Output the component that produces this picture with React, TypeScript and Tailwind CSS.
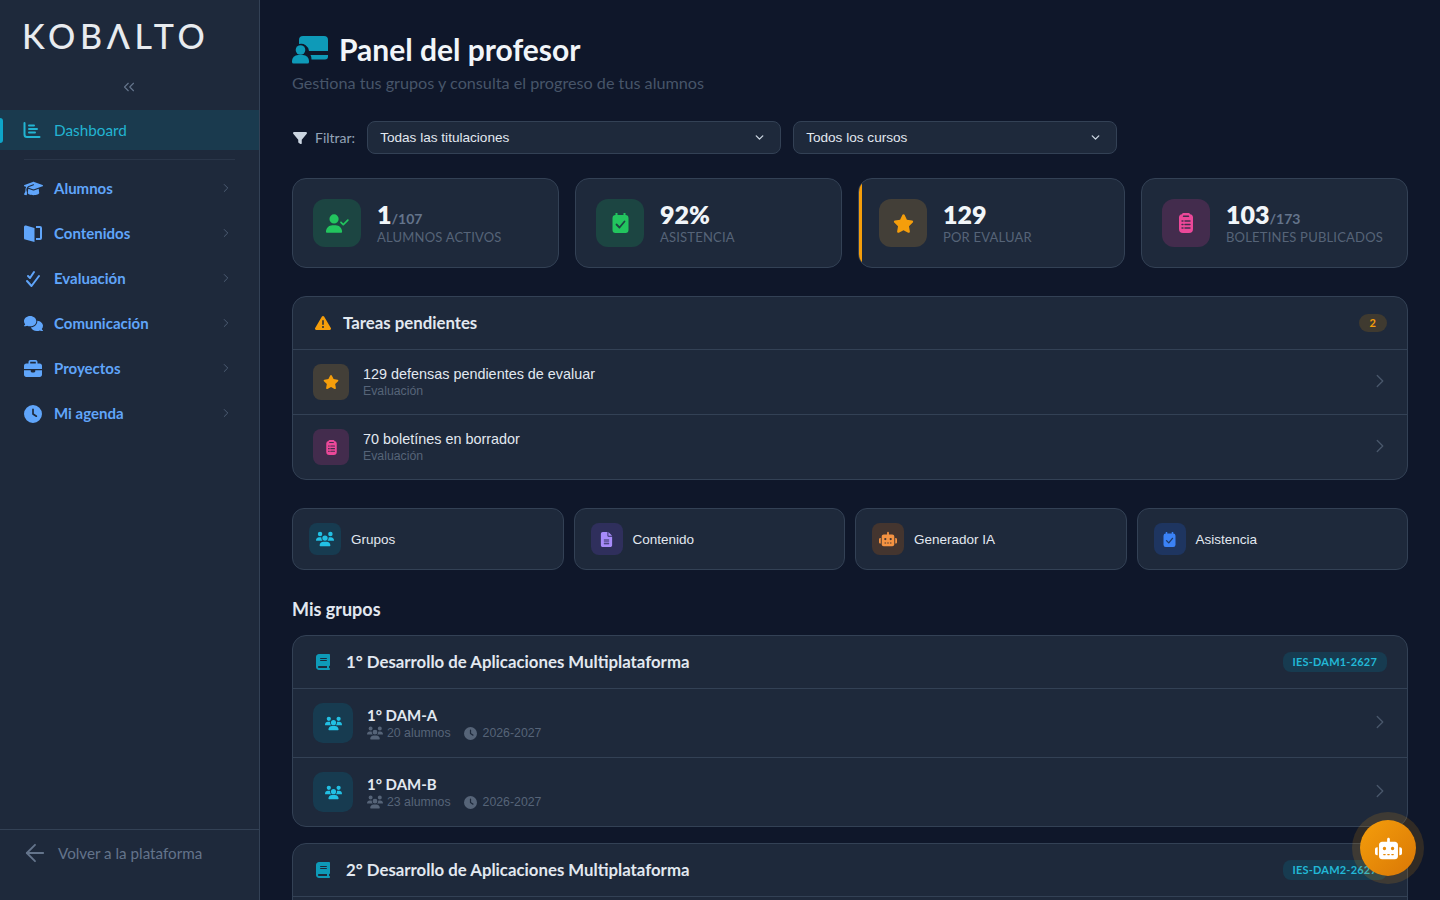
import type { ReactNode } from 'react';
import { ArrowLeft, ChevronDown, ChevronRight, ChevronsLeft } from 'lucide-react';
import {
  FaBook,
  FaBriefcase,
  FaClock,
  FaComments,
  FaFileLines,
  FaFilter,
  FaGraduationCap,
  FaRobot,
  FaStar,
  FaTriangleExclamation,
  FaUserCheck,
  FaUsers,
} from 'react-icons/fa6';

const heading = "font-['Lato',sans-serif]";
const body = "font-['Liberation_Sans',sans-serif]";

function DashboardIcon() {
  return (
    <svg width="18" height="18" viewBox="0 0 18 18" fill="none" stroke="currentColor" strokeWidth="2" strokeLinecap="round">
      <path d="M1.5 2v11.5a2.5 2.5 0 0 0 2.5 2.5h12.5" />
      <path d="M6 4.5h5M6 8h8M6 11.5h6" />
    </svg>
  );
}

function DoubleCheck() {
  return (
    <svg width="18" height="18" viewBox="0 0 18 18" fill="none" stroke="currentColor" strokeWidth="2" strokeLinecap="round" strokeLinejoin="round">
      <path d="M4 6l2 2 4-6" />
      <path d="M3 11l4.5 5L15 6" />
    </svg>
  );
}

function HalfBook() {
  return (
    <svg width="18" height="17" viewBox="0 0 18 17" fill="currentColor">
      <path d="M0 2a1.5 1.5 0 0 1 2-1.4L10.5 3v14L1.2 14.6A1.6 1.6 0 0 1 0 13z" />
      <path d="M12 1h4a2 2 0 0 1 2 2v10a2 2 0 0 1-2 2h-4v-2h4V3h-4z" />
    </svg>
  );
}

function TeacherIcon() {
  return (
    <svg width="36" height="28" viewBox="0 0 36 28" fill="currentColor">
      <path d="M7 4a4 4 0 0 1 4-4h21a4 4 0 0 1 4 4v11H17a8 8 0 0 0-10-7z" />
      <circle cx="8.5" cy="14" r="4.8" />
      <path d="M0 25a6 6 0 0 1 6-6h5a6 6 0 0 1 6 6v1a1.5 1.5 0 0 1-1.5 1.5h-14A1.5 1.5 0 0 1 0 26z" />
      <path d="M18.5 19H36v1.5a3 3 0 0 1-3 3H19.5a8 8 0 0 0-1-4.500z" />
    </svg>
  );
}

function CalendarFilled({ w, h, check }: { w: number; h: number; check: string }) {
  return (
    <svg width={w} height={h} viewBox="0 0 16 20" fill="currentColor">
      <path d="M3 0h2v2h6V0h2v2.100A3 3 0 0 1 16 5v12a3 3 0 0 1-3 3H3a3 3 0 0 1-3-3V5a3 3 0 0 1 3-2.900z" />
      <path d="M4 11.500l3 3 5-6" fill="none" stroke={check} strokeWidth="1.8" strokeLinecap="round" strokeLinejoin="round" />
    </svg>
  );
}

function ClipboardFilled({ w, h, tone }: { w: number; h: number; tone: string }) {
  return (
    <svg width={w} height={h} viewBox="0 0 14 20" fill="currentColor">
      <path d="M4.500 0h5A1.500 1.500 0 0 1 11 1.200 3.500 3.500 0 0 1 14 4.700V16a4 4 0 0 1-4 4H4a4 4 0 0 1-4-4V4.700A3.500 3.500 0 0 1 3 1.200 1.500 1.500 0 0 1 4.500 0z" />
      <path d="M4.500 3.200h5M3 8h1M6 8h5M3 11.500h1M6 11.500h5M3 15h1M6 15h5" fill="none" stroke={tone} strokeWidth="1.400" strokeLinecap="round" />
    </svg>
  );
}

const navItems: { label: string; icon: ReactNode }[] = [
  { label: 'Alumnos', icon: <FaGraduationCap size={19} /> },
  { label: 'Contenidos', icon: <HalfBook /> },
  { label: 'Evaluación', icon: <DoubleCheck /> },
  { label: 'Comunicación', icon: <FaComments size={19} /> },
  { label: 'Proyectos', icon: <FaBriefcase size={18} /> },
  { label: 'Mi agenda', icon: <FaClock size={18} /> },
];

function Sidebar() {
  return (
    <aside className="flex w-[260px] shrink-0 flex-col border-r border-[#334155] bg-[#1e293b]">
      <div className={`${heading} h-[70px] pl-[22px] pt-[13px] text-[34px] font-medium leading-[46px] tracking-[4.700px] text-[#e8ebef]`}>
        KOBΛLTO
      </div>
      <div className="flex h-[40px] justify-center pr-[1px] pt-[8px] text-[#64748b]">
        <ChevronsLeft size={18} strokeWidth={1.5} />
      </div>
      <div className="relative flex h-[40px] items-center gap-[13px] bg-[#1a3a4e] pl-[23px] text-[#22b4d2]">
        <span className="absolute left-0 top-[8px] h-[25px] w-[3px] rounded-r bg-[#0ea5c9]" />
        <DashboardIcon />
        <span className={`${heading} text-[15.300px]`}>Dashboard</span>
      </div>
      <div className="mx-[24px] mb-[6px] mt-[9px] h-px bg-[#2a3649]" />
      <nav className="flex flex-col">
        {navItems.map((item) => (
          <div key={item.label} className="flex h-[45px] items-center pl-[24px] pr-[26px] text-[#60a5fa]">
            <span className="flex w-[30px] shrink-0">{item.icon}</span>
            <span className={`${heading} flex-1 text-[15px] font-bold`}>{item.label}</span>
            <ChevronRight size={14} strokeWidth={1.5} className="-mt-[2px] text-[#52627a]" />
          </div>
        ))}
      </nav>
      <div className="mt-auto flex h-[71px] items-center gap-[9px] border-t border-[#334155] pb-[24px] pl-[21px] text-[#64748b]">
        <ArrowLeft size={28} strokeWidth={1.6} />
        <span className={`${heading} text-[15.200px]`}>Volver a la plataforma</span>
      </div>
    </aside>
  );
}

function Select({ label, className }: { label: string; className: string }) {
  return (
    <div className={`flex h-[33px] items-center justify-between rounded-lg border border-[#334155] bg-[#1e293b] pl-[12px] pr-[14px] ${className}`}>
      <span className={`${body} pt-[2px] text-[13.600px] text-[#e2e8f0]`}>{label}</span>
      <ChevronDown size={13} strokeWidth={2.5} className="text-[#cbd5e1]" />
    </div>
  );
}

function Stat({ icon, tint, value, total, label, accent }: { icon: ReactNode; tint: string; value: string; total?: string; label: string; accent?: boolean }) {
  return (
    <div className="relative flex h-[90px] items-center gap-[16px] overflow-hidden rounded-[14px] border border-[#334155] bg-[#1e293b] pl-[20px]">
      {accent && <span className="absolute bottom-0 left-0 top-0 w-[3px] rounded-r bg-[#f59e0b]" />}
      <div className={`flex h-[48px] w-[48px] items-center justify-center rounded-xl ${tint}`}>{icon}</div>
      <div className={`${heading} -mt-[2px]`}>
        <div className="flex items-baseline">
          <span className="text-[25px] font-extrabold leading-[30px] text-[#f1f5f9]">{value}</span>
          {total && <span className="text-[14px] font-bold text-[#64748b]">/{total}</span>}
        </div>
        <div className="text-[13px] leading-[16px] tracking-[0.2px] text-[#566478]">{label}</div>
      </div>
    </div>
  );
}

function RowChevron() {
  return <ChevronRight size={22} strokeWidth={1.5} className="-mt-[2px] text-[#475569]" />;
}

function TaskRow({ icon, tint, title }: { icon: ReactNode; tint: string; title: string }) {
  return (
    <div className="flex h-[65px] items-center gap-[14px] border-t border-[#334155] pl-[20px] pr-[16px]">
      <div className={`flex h-[36px] w-[36px] items-center justify-center rounded-lg ${tint}`}>{icon}</div>
      <div className={`${body} flex-1`}>
        <div className="text-[14.400px] leading-[18px] text-[#e2e8f0]">{title}</div>
        <div className="text-[12.300px] leading-[16px] text-[#566478]">Evaluación</div>
      </div>
      <RowChevron />
    </div>
  );
}

function QuickLink({ icon, tint, label }: { icon: ReactNode; tint: string; label: string }) {
  return (
    <div className="flex h-[62px] items-center gap-[10px] rounded-[12px] border border-[#334155] bg-[#1e293b] pl-[16px]">
      <div className={`flex h-[32px] w-[32px] items-center justify-center rounded-lg ${tint}`}>{icon}</div>
      <span className={`${body} pt-[2px] text-[13.500px] text-[#e2e8f0]`}>{label}</span>
    </div>
  );
}

function GroupRow({ name, students }: { name: string; students: number }) {
  return (
    <div className="flex h-[69px] items-center gap-[14px] border-t border-[#334155] pl-[20px] pr-[16px]">
      <div className="flex h-[40px] w-[40px] items-center justify-center rounded-[10px] bg-[#173b50] text-[#22c0e4]">
        <FaUsers size={17} />
      </div>
      <div className="flex-1">
        <div className={`${heading} text-[15px] font-bold leading-[20px] text-[#e2e8f0]`}>{name}</div>
        <div className={`${body} flex items-center text-[12.300px] leading-[16px] text-[#566478]`}>
          <FaUsers size={16} className="mr-[4px]" />
          <span>{students} alumnos</span>
          <FaClock size={13} className="ml-[13px] mr-[6px]" />
          <span>2026-2027</span>
        </div>
      </div>
      <RowChevron />
    </div>
  );
}

function GroupHeader({ title, code }: { title: string; code: string }) {
  return (
    <div className="flex h-[52px] items-center pl-[22px] pr-[20px]">
      <FaBook size={16} className="mr-[15px] text-[#0e9ab8]" />
      <span className={`${heading} flex-1 text-[16.800px] font-bold text-[#e2e8f0]`}>{title}</span>
      <span className={`${heading} rounded-lg bg-[#173b50] px-[10px] py-[2px] text-[11px] font-bold tracking-[0.2px] text-[#22b8d6]`}>{code}</span>
    </div>
  );
}

export default function App() {
  return (
    <div className="relative flex h-screen overflow-hidden bg-[#0f172a]">
      <Sidebar />
      <main className="min-w-0 flex-1 overflow-hidden px-[32px] pt-[32px]">
        <div className="flex h-[36px] items-center gap-[11px]">
          <span className="text-[#0e9ab8]">
            <TeacherIcon />
          </span>
          <h1 className={`${heading} -mt-[2px] text-[30px] font-bold text-[#f1f5f9]`}>Panel del profesor</h1>
        </div>
        <p className={`${heading} mt-[5px] text-[16.200px] leading-[20px] text-[#475569]`}>Gestiona tus grupos y consulta el progreso de tus alumnos</p>
        <div className="mt-[28px] flex items-center pl-[1px]">
          <FaFilter size={14} className="mr-[8px] text-[#cbd5e1]" />
          <span className={`${heading} mr-[12px] text-[14px] text-[#94a3b8]`}>Filtrar:</span>
          <Select label="Todas las titulaciones" className="w-[414px]" />
          <Select label="Todos los cursos" className="ml-[12px] w-[324px]" />
        </div>
        <div className="mt-[24px] grid grid-cols-4 gap-[16px]">
          <Stat icon={<FaUserCheck size={23} className="text-[#22c55e]" />} tint="bg-[#1c4542]" value="1" total="107" label="ALUMNOS ACTIVOS" />
          <Stat icon={<span className="text-[#22c55e]"><CalendarFilled w={17} h={20} check="#1c4542" /></span>} tint="bg-[#1c4542]" value="92%" label="ASISTENCIA" />
          <Stat icon={<FaStar size={21} className="text-[#f59e0b]" />} tint="bg-[#433f38]" value="129" label="POR EVALUAR" accent />
          <Stat icon={<span className="text-[#ec4899]"><ClipboardFilled w={14} h={20} tone="#432c4d" /></span>} tint="bg-[#432c4d]" value="103" total="173" label="BOLETINES PUBLICADOS" />
        </div>
        <section className="mt-[28px] overflow-hidden rounded-[14px] border border-[#334155] bg-[#1e293b]">
          <div className="flex h-[52px] items-center pl-[22px] pr-[20px]">
            <FaTriangleExclamation size={16} className="mr-[12px] text-[#f59e0b]" />
            <span className={`${heading} flex-1 text-[16.800px] font-bold text-[#e2e8f0]`}>Tareas pendientes</span>
            <span className={`${heading} rounded-full bg-[#3f3a30] px-[11px] py-[1px] text-[11px] font-bold text-[#f59e0b]`}>2</span>
          </div>
          <TaskRow icon={<FaStar size={16} className="-mt-[1px] text-[#f59e0b]" />} tint="bg-[#433f38]" title="129 defensas pendientes de evaluar" />
          <TaskRow icon={<span className="text-[#ec4899]"><ClipboardFilled w={11} h={15} tone="#432c4d" /></span>} tint="bg-[#432c4d]" title="70 boletínes en borrador" />
        </section>
        <div className="mt-[28px] grid grid-cols-4 gap-[10px]">
          <QuickLink icon={<FaUsers size={18} className="text-[#22c0e4]" />} tint="bg-[#173b50]" label="Grupos" />
          <QuickLink icon={<FaFileLines size={15} className="text-[#a78bfa]" />} tint="bg-[#2f2f5c]" label="Contenido" />
          <QuickLink icon={<FaRobot size={18} className="text-[#f59342]" />} tint="bg-[#44352f]" label="Generador IA" />
          <QuickLink icon={<span className="text-[#3b82f6]"><CalendarFilled w={13} h={15} check="#1e3a68" /></span>} tint="bg-[#1e3560]" label="Asistencia" />
        </div>
        <h2 className={`${heading} mt-[27px] text-[18px] font-bold leading-[24px] text-[#e2e8f0]`}>Mis grupos</h2>
        <section className="mt-[14px] overflow-hidden rounded-[14px] border border-[#334155] bg-[#1e293b]">
          <GroupHeader title="1° Desarrollo de Aplicaciones Multiplataforma" code="IES-DAM1-2627" />
          <GroupRow name="1° DAM-A" students={20} />
          <GroupRow name="1° DAM-B" students={23} />
        </section>
        <section className="mt-[16px] overflow-hidden rounded-[14px] border border-[#334155] bg-[#1e293b]">
          <GroupHeader title="2° Desarrollo de Aplicaciones Multiplataforma" code="IES-DAM2-2627" />
          <div className="h-[69px] border-t border-[#334155]" />
        </section>
      </main>
      <button className="absolute bottom-[24px] right-[24px] flex h-[56px] w-[56px] items-center justify-center rounded-full bg-gradient-to-br from-[#f59e0b] to-[#d97706] text-white shadow-[0_0_0_8px_rgba(245,158,11,0.15)]">
        <FaRobot size={27} />
      </button>
    </div>
  );
}
